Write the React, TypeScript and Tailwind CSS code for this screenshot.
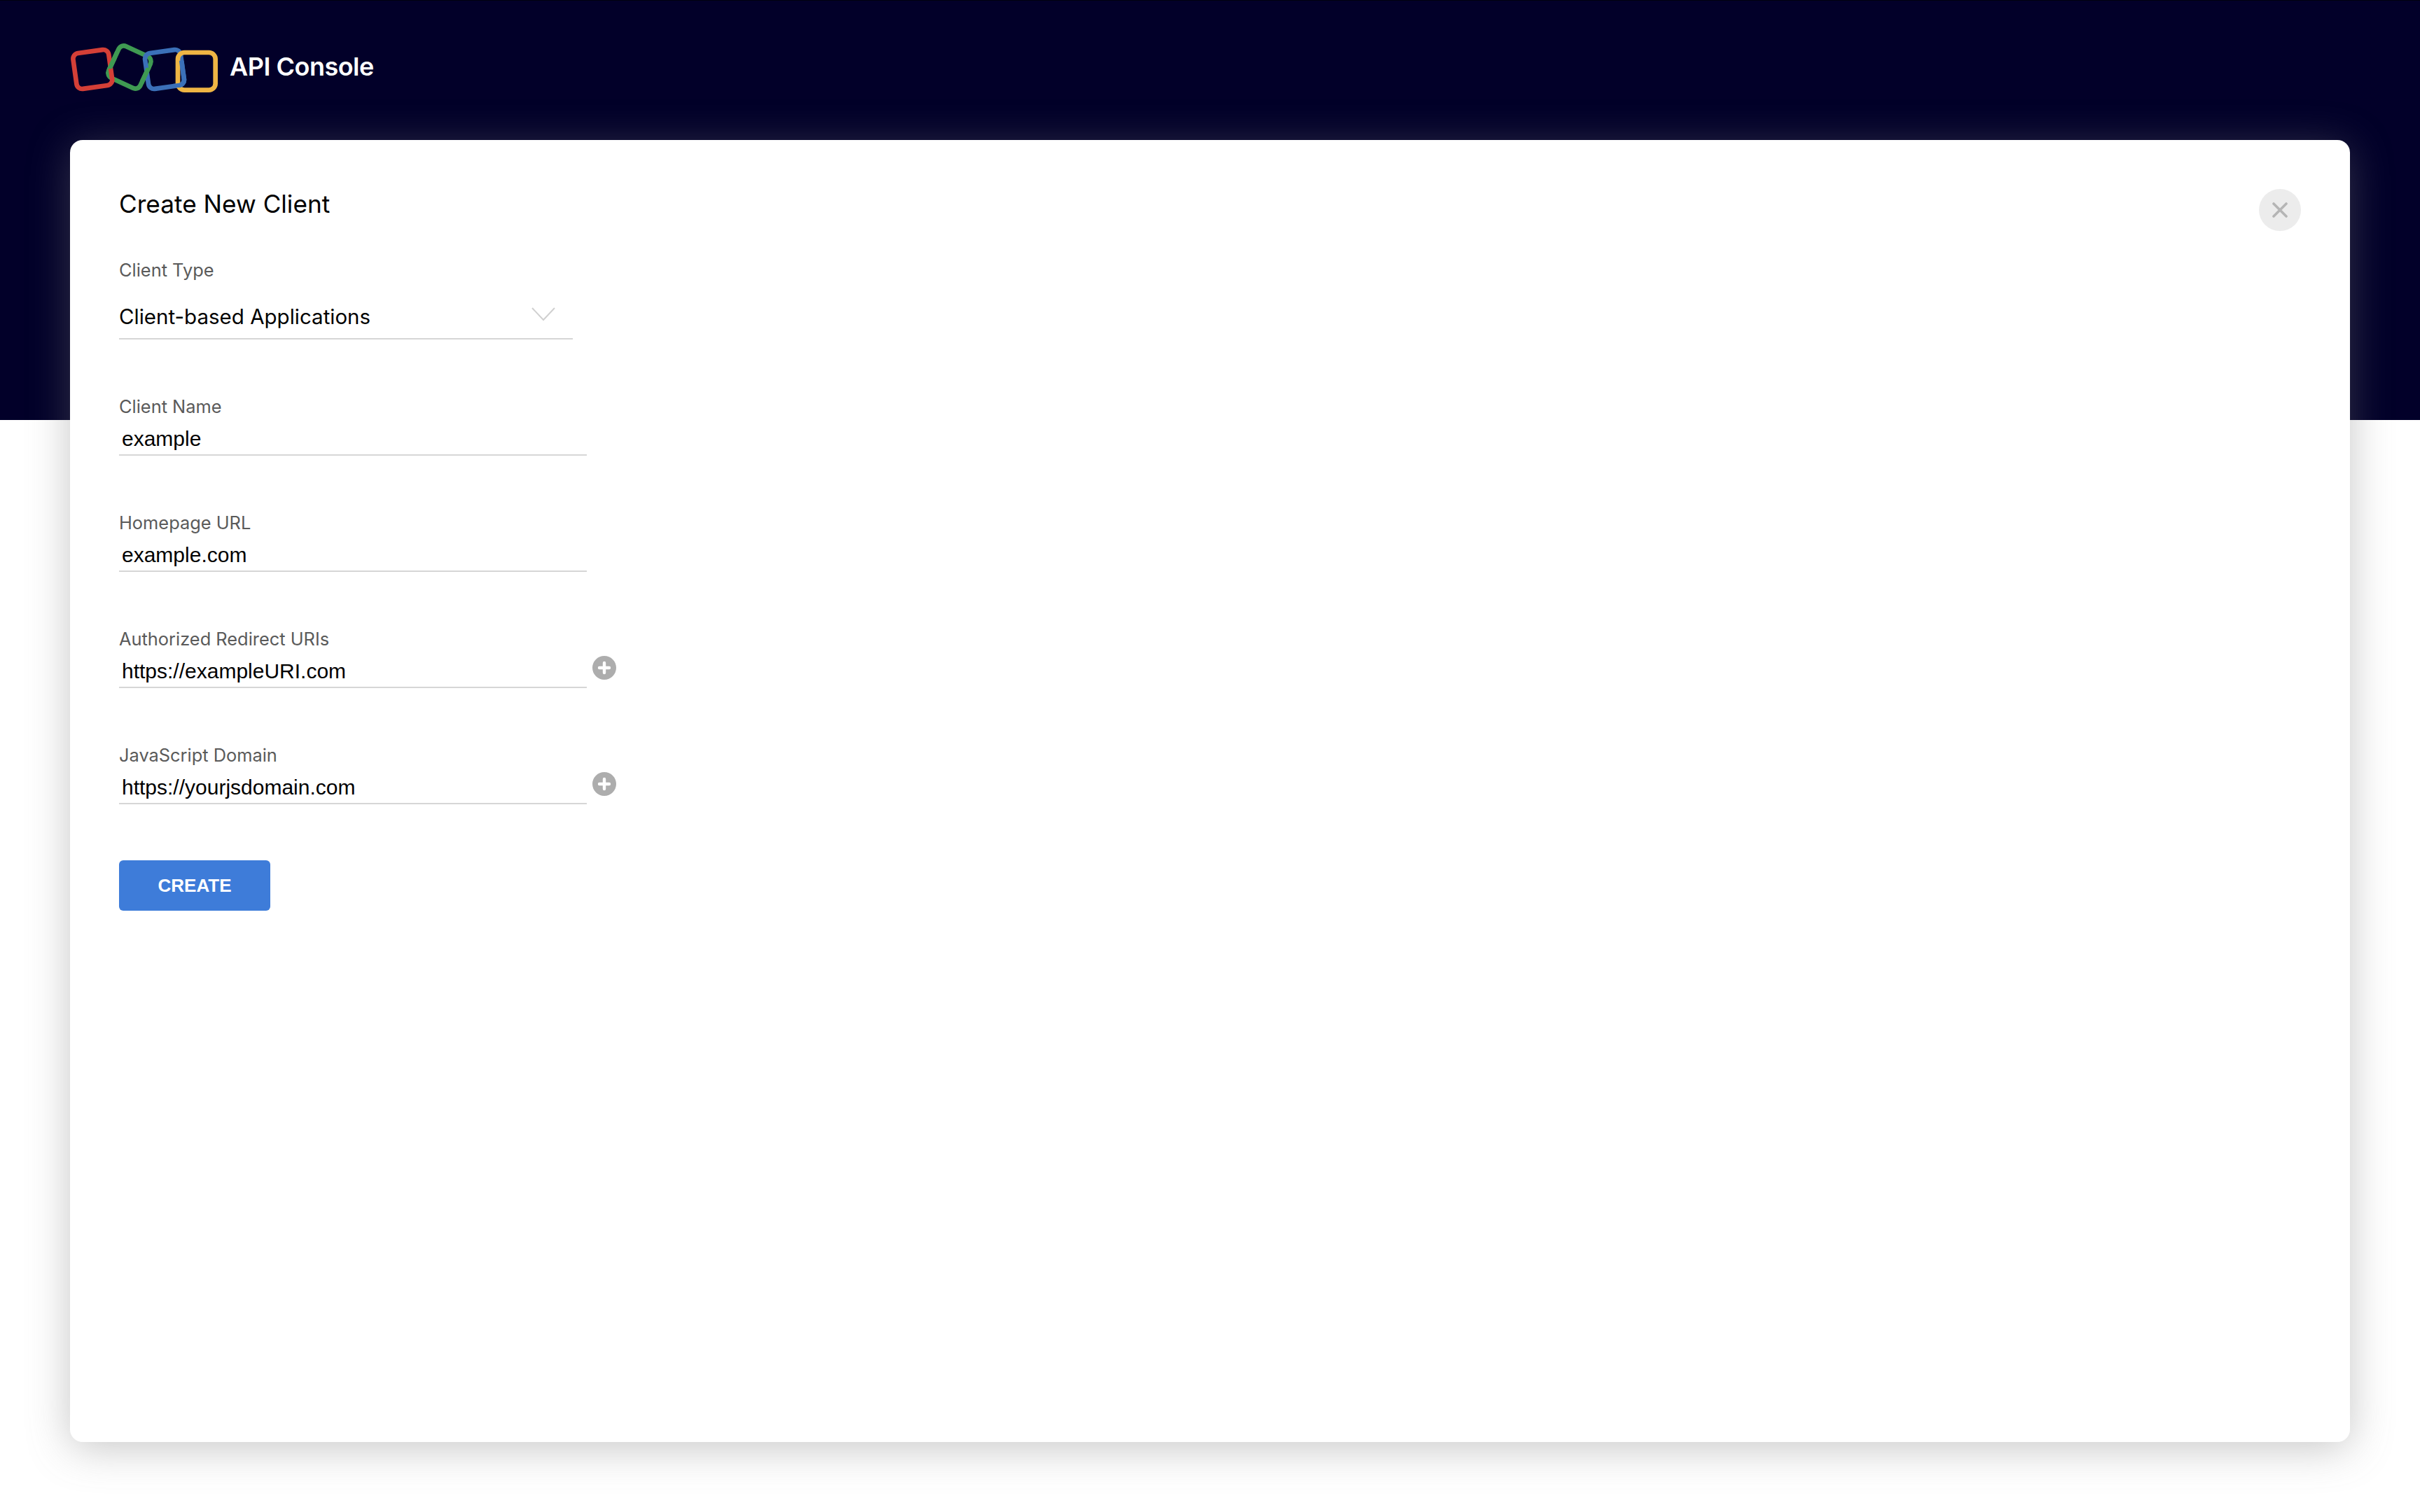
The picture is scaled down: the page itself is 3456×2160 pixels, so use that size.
import React from "react";

const inter = "font-['Inter','Noto_Sans',sans-serif]";
const arial = "font-['Liberation_Sans',Arial,sans-serif]";

const green = { x: 240, y: 93, width: 150, height: 150, rx: 24, transform: "rotate(25 315 168)", stroke: "#3f9a52", strokeWidth: 20 };
const blue = { x: 388, y: 100, width: 154, height: 154, rx: 24, transform: "rotate(-8 465 177)", stroke: "#3b70b8", strokeWidth: 20 };

function Logo() {
  return (
    <svg width="240" height="110" viewBox="0 0 720 330" className="block shrink-0 -ml-[20px]" fill="none">
      <defs>
        <clipPath id="green-over-red"><rect x="200" y="100" width="62" height="75" /></clipPath>
        <clipPath id="green-over-blue"><rect x="360" y="170" width="60" height="70" /></clipPath>
        <clipPath id="blue-over-yellow"><rect x="500" y="140" width="75" height="116" /></clipPath>
      </defs>
      <rect {...green} />
      <rect x="80" y="100" width="154" height="154" rx="24" transform="rotate(-8 157 177)" stroke="#d43f37" strokeWidth="20" />
      <rect {...blue} />
      <rect x="522" y="105" width="161" height="161" rx="28" stroke="#efb544" strokeWidth="20" />
      <g clipPath="url(#green-over-red)"><rect {...green} /></g>
      <g clipPath="url(#green-over-blue)"><rect {...green} /></g>
      <g clipPath="url(#blue-over-yellow)"><rect {...blue} /></g>
    </svg>
  );
}

function Plus() {
  return (
    <svg width="34" height="34" viewBox="0 0 34 34" className="block">
      <circle cx="17" cy="17" r="17" fill="#adadad" />
      <path d="M17 10v14M10 17h14" stroke="#fff" strokeWidth="4.4" strokeLinecap="round" />
    </svg>
  );
}

function Field({ label, value, plus }: { label: string; value: string; plus?: boolean }) {
  return (
    <div className="relative h-[166px] w-[668px]">
      <div className={`${inter} h-[46px] pt-[9px] text-[25.4px] leading-[32px] text-[#5a5a5a]`}>{label}</div>
      <div className={`${arial} h-[49px] border-b-2 border-[#d6d6d6] pl-[4px] text-[30px] leading-[50px] text-black`}>{value}</div>
      {plus && (
        <div className="absolute left-[676px] top-[49px]">
          <Plus />
        </div>
      )}
    </div>
  );
}

export default function App() {
  return (
    <div className="min-h-[2160px] w-full bg-white">
      <header className="h-[600px] border-t border-[#01010f] bg-[#020029]">
        <div className="flex h-[150px] items-center pl-[100px] pt-[37px]">
          <Logo />
          <span className={`${inter} ml-[8px] text-[36px] font-semibold tracking-[-0.5px] text-white`}>API Console</span>
        </div>
      </header>
      <main className="relative mx-[100px] -mt-[400px] h-[1860px] rounded-[18px] bg-white pl-[70px] pt-[64px] shadow-[0_8px_60px_rgba(118,118,118,0.42)]">
        <h1 className={`${inter} text-[35.2px] leading-[54px] font-normal text-black`}>Create New Client</h1>
        <button className="absolute right-[70px] top-[70px] flex h-[60px] w-[60px] items-center justify-center rounded-full bg-[#ececec]">
          <svg width="22" height="22" viewBox="0 0 22 22">
            <path d="M2 2l18 18M20 2L2 20" stroke="#b5b5b5" strokeWidth="3.6" strokeLinecap="round" />
          </svg>
        </button>

        <div className="mt-[52px] h-[186px] w-[648px]">
          <div className={`${inter} h-[46px] text-[25.4px] leading-[32px] text-[#5a5a5a]`}>Client Type</div>
          <div className={`${inter} flex h-[69px] items-start justify-between border-b-2 border-[#d6d6d6] pr-[24px] text-[29.5px] leading-[44px] text-black`}>
            <span className="pt-[14px]">Client-based Applications</span>
            <svg width="36" height="20" viewBox="0 0 36 20" className="mt-[23px]" fill="none">
              <path d="M2 1l16 17L34 1" stroke="#d0d0d0" strokeWidth="2" />
            </svg>
          </div>
        </div>

        <div className="flex flex-col">
          <Field label="Client Name" value="example" />
          <Field label="Homepage URL" value="example.com" />
          <Field label="Authorized Redirect URIs" value="https://exampleURI.com" plus />
          <Field label="JavaScript Domain" value="https://yourjsdomain.com" plus />
        </div>

        <button className={`${arial} mt-[9px] flex h-[72px] w-[216px] items-center justify-center rounded-[6px] bg-[#3e7cd9] text-[26px] font-bold text-white`}>
          CREATE
        </button>
      </main>
    </div>
  );
}
